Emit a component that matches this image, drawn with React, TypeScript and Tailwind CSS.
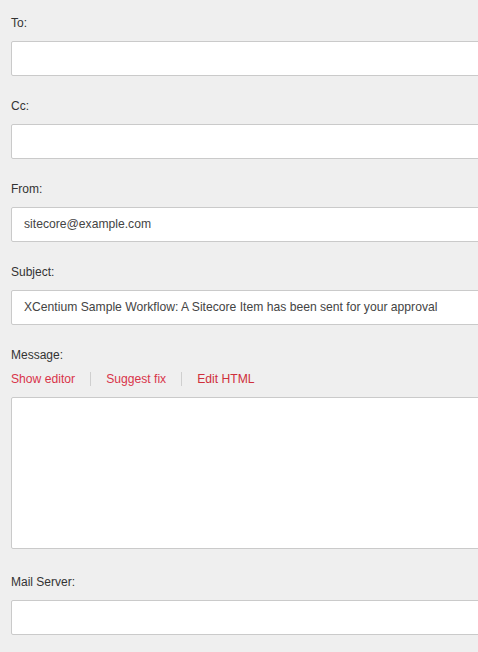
import React from 'react';

// 메일 설정 폼 필드
function Field({ label, value }: { label: string; value?: string }) {
  return (
    <div className="mb-[21px]">
      <div className="h-[18px] mb-[9px] leading-[18px] text-[12px] text-[#333]">{label}</div>
      <div className="w-[540px] h-[35px] bg-white border border-[#cacaca] rounded-[2px] pl-[12px] flex items-center text-[12.15px] text-[#444]">
        {value}
      </div>
    </div>
  );
}

export default function App() {
  return (
    <div
      className="w-[478px] h-[652px] overflow-hidden bg-[#efefef] pl-[11px] pt-[14px]"
      style={{ fontFamily: '"Liberation Sans", Arial, sans-serif' }}
    >
      <Field label="To:" />
      <Field label="Cc:" />
      <Field label="From:" value="sitecore@example.com" />
      <Field
        label="Subject:"
        value="XCentium Sample Workflow: A Sitecore Item has been sent for your approval"
      />

      {/* 메시지 */}
      <div className="h-[18px] mb-[6px] leading-[18px] text-[12px] text-[#333]">Message:</div>
      <div className="h-[18px] mb-[9px] flex items-center text-[12.15px] text-[#d9344a] leading-[18px]">
        <span>Show editor</span>
        <span className="mx-[15px] w-px h-[14px] bg-[#cfcfcf]" />
        <span>Suggest fix</span>
        <span className="mx-[15px] w-px h-[14px] bg-[#cfcfcf]" />
        <span className="text-[#cf2f3c]">Edit HTML</span>
      </div>
      <div className="w-[540px] h-[152px] bg-white border border-[#cacaca] rounded-[2px] mb-[24px]" />

      <Field label="Mail Server:" />
    </div>
  );
}
